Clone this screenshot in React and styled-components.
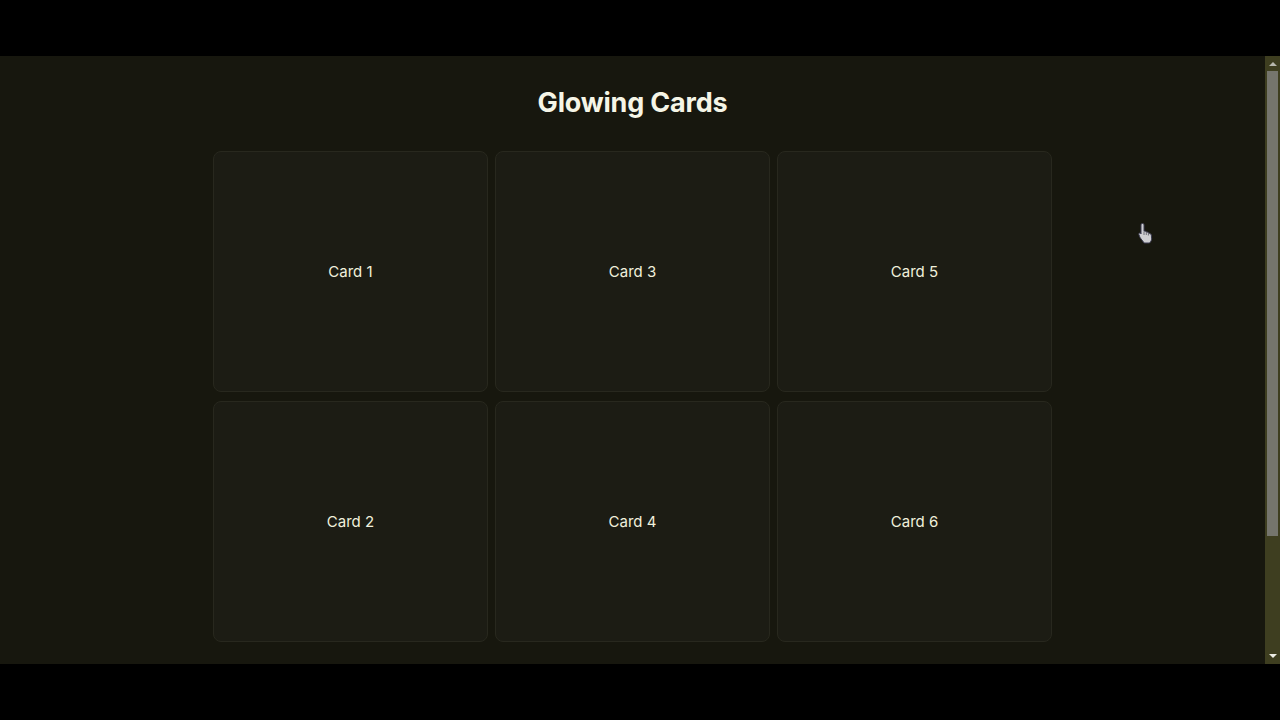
import React from 'react'
import styled, { createGlobalStyle } from 'styled-components'

const GlobalStyle = createGlobalStyle`
    html, body {
        margin: 0;
        padding: 0;
        background: #000;
        font-family: Inter, "Liberation Sans", sans-serif;
    }
`

const cards = ['Card 1', 'Card 2', 'Card 3', 'Card 4', 'Card 5', 'Card 6']

export default function App() {
    return (
        <>
            <GlobalStyle />
            <Frame>
                <Letterbox />
                <Viewport>
                    <Content>
                        <Title>Glowing Cards</Title>
                        <Grid>
                            {cards.map(label => (
                                <Card key={label}>
                                    <Label>{label}</Label>
                                </Card>
                            ))}
                        </Grid>
                    </Content>
                    <Rail>
                        <Arrow>
                            <svg width='8' height='5' viewBox='0 0 8 5'>
                                <path d='M0 5 4 1 8 5z' fill='#b8b8ae' />
                            </svg>
                        </Arrow>
                        <Track>
                            <Thumb />
                        </Track>
                        <Arrow>
                            <svg width='8' height='5' viewBox='0 0 8 5'>
                                <path d='M0 0h8L4 4z' fill='#ececE4' />
                            </svg>
                        </Arrow>
                    </Rail>
                </Viewport>
                <Letterbox />
                <Pointer viewBox='0 0 18 22' width='18' height='22'>
                    <path
                        d='M5.5 1.5c.9 0 1.5.6 1.5 1.5v6.2l.4-.1c.8-.2 1.5.2 1.7.9l.2-.1c.8-.2 1.5.2 1.7.9.8-.2 1.6.2 1.8 1 .7-.1 1.4.4 1.5 1.1l.3 3.3c.1 1.5-.4 2.9-1.4 4l-.7.8H7.2l-3.4-4.4c-.5-.6-1-1.6-1.3-2.4l-.6-1.6c-.3-.7 0-1.3.6-1.5.6-.2 1.2.1 1.5.6L4 12V3c0-.9.6-1.5 1.5-1.5z'
                        fill='#cfcfd2'
                        stroke='#3a3a50'
                        strokeWidth='1'
                        strokeLinejoin='round'
                    />
                    <path d='M7 9.5v3.5M9.3 10v3M11.4 11v2.5' stroke='#55555f' strokeWidth='.8' />
                </Pointer>
            </Frame>
        </>
    )
}

const Frame = styled.div`
    position: relative;
    width: 1280px;
    height: 720px;
    display: flex;
    flex-direction: column;
    overflow: hidden;
`
const Letterbox = styled.div`
    height: 56px;
    flex: none;
    background: #000;
`
const Viewport = styled.main`
    height: 608px;
    flex: none;
    display: flex;
    background: #17170e;
`
const Content = styled.div`
    flex: 1;
    overflow: hidden;
    padding-top: 30px;
`
const Rail = styled.div`
    width: 15px;
    flex: none;
    display: flex;
    flex-direction: column;
    background: #3e3e20;
`
const Arrow = styled.div`
    height: 15px;
    flex: none;
    display: flex;
    align-items: center;
    justify-content: center;
`
const Track = styled.div`
    flex: 1;
    display: flex;
    flex-direction: column;
    padding: 0 2px;
`
const Thumb = styled.div`
    height: 465px;
    background: #75756d;
`
const Title = styled.h1`
    margin: 0 0 31px;
    text-align: center;
    font-size: 27px;
    line-height: 34px;
    font-weight: 700;
    letter-spacing: -0.2px;
    color: #f5f5e6;
`
const Grid = styled.div`
    display: grid;
    grid-template-columns: repeat(3, 275px);
    grid-template-rows: repeat(2, 241px);
    grid-auto-flow: column;
    column-gap: 7px;
    row-gap: 9px;
    justify-content: center;
`
const Card = styled.div`
    display: flex;
    align-items: center;
    justify-content: center;
    background: #1c1c14;
    border: 1px solid #28281e;
    border-radius: 8px;
    box-sizing: border-box;
`
const Label = styled.span`
    font-size: 15px;
    color: #f0f0dc;
`
const Pointer = styled.svg`
    position: absolute;
    left: 1137px;
    top: 222px;
    pointer-events: none;
`
